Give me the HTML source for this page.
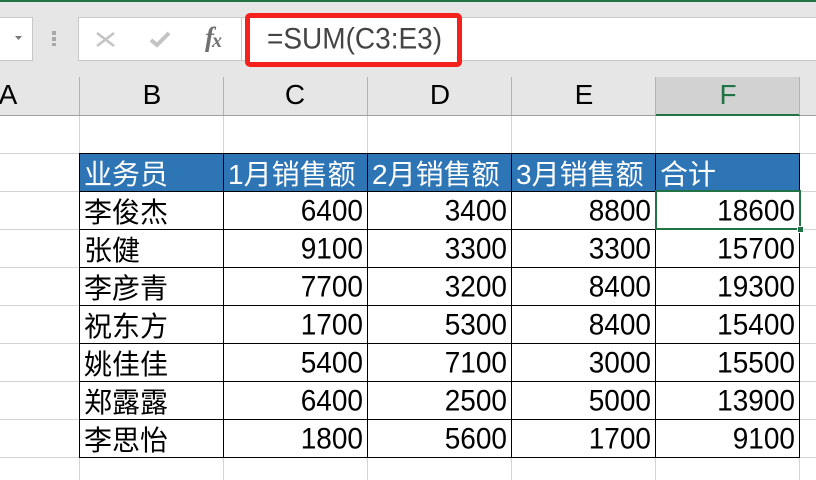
<!DOCTYPE html>
<html><head><meta charset="utf-8">
<style>
html,body{margin:0;padding:0;background:#fff}
#p{position:relative;width:816px;height:480px;overflow:hidden;background:#fff;font-family:"Liberation Sans","Noto Sans CJK SC",sans-serif;color:#000}
#p div{position:absolute;box-sizing:border-box}
.t{font-size:28px;line-height:38px;height:38px;white-space:nowrap;margin-top:2px}
.n{text-align:right;width:140px;margin-top:0;transform:scaleY(1.06);transform-origin:50% 50%}
.h{color:#fff}
.c{font-size:28px;line-height:38px;top:76px;text-align:center;width:144px;height:38px}
</style></head><body>
<div id="p">
<div style="left:0;top:0;width:816px;height:77px;background:#e6e6e6"></div>
<div style="left:0;top:0;width:816px;height:2px;background:#217346"></div>
<div style="left:0;top:17px;width:33px;height:44px;background:#fff;border:1px solid #c8c8c8;border-left:0"></div>
<svg style="position:absolute;left:0;top:0" width="70" height="70">
<path d="M15 36h7l-3.500 4z" fill="#777"/>
<g fill="#a8a8a8"><rect x="52" y="31" width="4" height="4"/><rect x="52" y="37" width="4" height="4"/><rect x="52" y="43" width="4" height="3"/></g>
</svg>
<div style="left:78px;top:17px;width:164px;height:44px;background:#fff;border:1px solid #c8c8c8"></div>
<svg style="position:absolute;left:0;top:0" width="270" height="70">
<path d="M97 33l17 13M114 33l-17 13" stroke="#c4c4c4" stroke-width="2.600" fill="none"/>
<path d="M151 40l6 5 12-12" stroke="#c4c4c4" stroke-width="4" fill="none"/>
<text x="205" y="46" font-family="Liberation Serif" font-style="italic" font-weight="bold" font-size="27" fill="#707070">f</text>
<text x="212" y="47" font-family="Liberation Serif" font-style="italic" font-weight="bold" font-size="20" fill="#707070">x</text>
</svg>
<div style="left:242px;top:17px;width:574px;height:44px;background:#fff;border-top:1px solid #c8c8c8;border-bottom:1px solid #c8c8c8"></div>
<div style="left:245px;top:13px;width:217px;height:54px;background:#fff;border:5px solid #f5211d;border-radius:5px"></div>
<div style="left:267px;top:21px;font-size:28px;line-height:36px;color:#444;white-space:nowrap;transform:scaleY(1.06);transform-origin:50% 50%">=SUM(C3:E3)</div>

<div style="left:0;top:77px;width:816px;height:39px;background:#e6e6e6"></div>
<div style="left:656px;top:77px;width:144px;height:39px;background:#d2d2d2"></div>
<div style="left:0;top:115px;width:816px;height:1px;background:#9e9e9e"></div>
<div style="left:656px;top:114px;width:144px;height:2px;background:#217346"></div>
<div style="left:79px;top:77px;width:1px;height:38px;background:#b4b4b4"></div>
<div style="left:223px;top:77px;width:1px;height:38px;background:#b4b4b4"></div>
<div style="left:367px;top:77px;width:1px;height:38px;background:#b4b4b4"></div>
<div style="left:511px;top:77px;width:1px;height:38px;background:#b4b4b4"></div>
<div style="left:655px;top:77px;width:1px;height:38px;background:#b4b4b4"></div>
<div style="left:799px;top:77px;width:1px;height:38px;background:#b4b4b4"></div>
<div class="c" style="left:-64px">A</div>
<div class="c" style="left:80px">B</div>
<div class="c" style="left:223px">C</div>
<div class="c" style="left:368px">D</div>
<div class="c" style="left:512px">E</div>
<div class="c" style="left:656px;color:#217346">F</div>

<div style="left:79px;top:116px;width:1px;height:364px;background:#d4d4d4"></div>
<div style="left:223px;top:116px;width:1px;height:364px;background:#d4d4d4"></div>
<div style="left:367px;top:116px;width:1px;height:364px;background:#d4d4d4"></div>
<div style="left:511px;top:116px;width:1px;height:364px;background:#d4d4d4"></div>
<div style="left:655px;top:116px;width:1px;height:364px;background:#d4d4d4"></div>
<div style="left:799px;top:116px;width:1px;height:364px;background:#d4d4d4"></div>
<div style="left:0;top:153px;width:816px;height:1px;background:#d4d4d4"></div>
<div style="left:0;top:191px;width:816px;height:1px;background:#d4d4d4"></div>
<div style="left:0;top:229px;width:816px;height:1px;background:#d4d4d4"></div>
<div style="left:0;top:267px;width:816px;height:1px;background:#d4d4d4"></div>
<div style="left:0;top:305px;width:816px;height:1px;background:#d4d4d4"></div>
<div style="left:0;top:343px;width:816px;height:1px;background:#d4d4d4"></div>
<div style="left:0;top:381px;width:816px;height:1px;background:#d4d4d4"></div>
<div style="left:0;top:419px;width:816px;height:1px;background:#d4d4d4"></div>
<div style="left:0;top:457px;width:816px;height:1px;background:#d4d4d4"></div>

<div style="left:79px;top:153px;width:721px;height:39px;background:#2e75b6"></div>
<div style="left:79px;top:153px;width:721px;height:1px;background:#000"></div>
<div style="left:79px;top:191px;width:721px;height:1px;background:#000"></div>
<div style="left:79px;top:229px;width:721px;height:1px;background:#000"></div>
<div style="left:79px;top:267px;width:721px;height:1px;background:#000"></div>
<div style="left:79px;top:305px;width:721px;height:1px;background:#000"></div>
<div style="left:79px;top:343px;width:721px;height:1px;background:#000"></div>
<div style="left:79px;top:381px;width:721px;height:1px;background:#000"></div>
<div style="left:79px;top:419px;width:721px;height:1px;background:#000"></div>
<div style="left:79px;top:457px;width:721px;height:1px;background:#000"></div>
<div style="left:79px;top:153px;width:1px;height:305px;background:#000"></div>
<div style="left:223px;top:153px;width:1px;height:305px;background:#000"></div>
<div style="left:367px;top:153px;width:1px;height:305px;background:#000"></div>
<div style="left:511px;top:153px;width:1px;height:305px;background:#000"></div>
<div style="left:655px;top:153px;width:1px;height:305px;background:#000"></div>
<div style="left:799px;top:153px;width:1px;height:305px;background:#000"></div>

<div class="t h" style="left:84px;top:154px">业务员</div>
<div class="t h" style="left:228px;top:154px">1月销售额</div>
<div class="t h" style="left:372px;top:154px">2月销售额</div>
<div class="t h" style="left:516px;top:154px">3月销售额</div>
<div class="t h" style="left:660px;top:154px">合计</div>

<div class="t" style="left:84px;top:192px">李俊杰</div>
<div class="t n" style="left:223px;top:192px">6400</div>
<div class="t n" style="left:367px;top:192px">3400</div>
<div class="t n" style="left:511px;top:192px">8800</div>
<div class="t n" style="left:655px;top:192px">18600</div>

<div class="t" style="left:84px;top:230px">张健</div>
<div class="t n" style="left:223px;top:230px">9100</div>
<div class="t n" style="left:367px;top:230px">3300</div>
<div class="t n" style="left:511px;top:230px">3300</div>
<div class="t n" style="left:655px;top:230px">15700</div>

<div class="t" style="left:84px;top:268px">李彦青</div>
<div class="t n" style="left:223px;top:268px">7700</div>
<div class="t n" style="left:367px;top:268px">3200</div>
<div class="t n" style="left:511px;top:268px">8400</div>
<div class="t n" style="left:655px;top:268px">19300</div>

<div class="t" style="left:84px;top:306px">祝东方</div>
<div class="t n" style="left:223px;top:306px">1700</div>
<div class="t n" style="left:367px;top:306px">5300</div>
<div class="t n" style="left:511px;top:306px">8400</div>
<div class="t n" style="left:655px;top:306px">15400</div>

<div class="t" style="left:84px;top:344px">姚佳佳</div>
<div class="t n" style="left:223px;top:344px">5400</div>
<div class="t n" style="left:367px;top:344px">7100</div>
<div class="t n" style="left:511px;top:344px">3000</div>
<div class="t n" style="left:655px;top:344px">15500</div>

<div class="t" style="left:84px;top:382px">郑露露</div>
<div class="t n" style="left:223px;top:382px">6400</div>
<div class="t n" style="left:367px;top:382px">2500</div>
<div class="t n" style="left:511px;top:382px">5000</div>
<div class="t n" style="left:655px;top:382px">13900</div>

<div class="t" style="left:84px;top:420px">李思怡</div>
<div class="t n" style="left:223px;top:420px">1800</div>
<div class="t n" style="left:367px;top:420px">5600</div>
<div class="t n" style="left:511px;top:420px">1700</div>
<div class="t n" style="left:655px;top:420px">9100</div>

<div style="left:655px;top:190px;width:146px;height:40px;border:2px solid #217346"></div>
<div style="left:797px;top:226px;width:7px;height:7px;background:#217346;border:1px solid #fff"></div>
</div>
</body></html>
